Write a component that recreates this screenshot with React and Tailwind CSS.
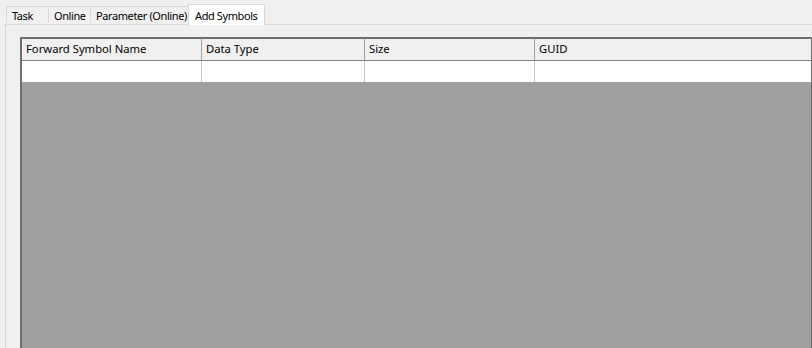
export default function App() {
  const tabs = [
    { name: "Task", w: "w-[42px]" },
    { name: "Online", w: "w-[42px]" },
    { name: "Parameter (Online)", w: "w-[98px]" },
  ];
  const cols = [
    { name: "Forward Symbol Name", w: "w-[180px]" },
    { name: "Data Type", w: "w-[163px]" },
    { name: "Size", w: "w-[170px]" },
  ];

  return (
    <div className="w-[812px] h-[348px] overflow-hidden bg-[#f0f0f0] text-[11.25px] text-black font-['Noto_Sans','Open_Sans',sans-serif] flex flex-col">
      {/* TAB STRIP */}
      <div className="flex items-end pl-[6px] h-[24px] pt-[3px] shrink-0 text-[11px] tracking-[-0.4px]">
        {tabs.map((t) => (
          <div
            key={t.name}
            className={`${t.w} h-[17px] mb-[1px] pl-[5px] border-t border-l border-[#d9d9d9] flex items-center leading-none whitespace-nowrap`}
          >
            {t.name}
          </div>
        ))}
        <div className="w-[77px] h-[21px] pl-[6px] bg-white border border-b-0 border-[#d9d9d9] flex items-center leading-none -mb-[1px] relative z-10 whitespace-nowrap">
          Add Symbols
        </div>
      </div>

      {/* PANEL */}
      <div className="flex-1 ml-[5px] border-t border-l border-[#d9d9d9] pl-[14px] pt-[12px] flex items-start">
        <div className="flex-1 h-[340px] border-2 border-b-0 border-r-[1px] border-[#6e6e6e] bg-[#a0a0a0] flex flex-col">
          {/* HEADER */}
          <div className="flex h-[22px] bg-[#f0f0f0] border-b border-[#808080]">
            {cols.map((c) => (
              <div
                key={c.name}
                className={`${c.w} shrink-0 border-r border-[#a0a0a0] px-[4px] flex items-center whitespace-nowrap`}
              >
                {c.name}
              </div>
            ))}
            <div className="flex-1 px-[4px] flex items-center">GUID</div>
          </div>

          {/* EMPTY ROW */}
          <div className="flex h-[21px] bg-white">
            {cols.map((c) => (
              <div key={c.name} className={`${c.w} shrink-0 border-r border-[#c8c8c8]`} />
            ))}
            <div className="flex-1" />
          </div>
        </div>
      </div>
    </div>
  );
}
